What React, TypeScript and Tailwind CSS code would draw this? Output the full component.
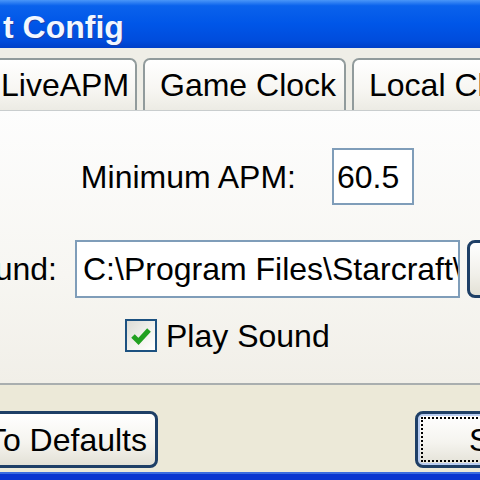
import React from "react";

const font = { fontFamily: '"Liberation Sans", Arial, sans-serif' };

function Tab({ label, className }: { label: string; className: string }) {
  return (
    <div
      className={`shrink-0 flex items-center pl-[15px] border-2 border-b-0 border-[#919B9C] rounded-t-[7px] bg-[linear-gradient(to_bottom,#FFFFFF,#F7F6F2_60%,#ECEBE4)] text-[32px] text-black whitespace-nowrap overflow-hidden ${className}`}
    >
      {label}
    </div>
  );
}

function XpButton({
  children,
  className,
  focused,
}: {
  children: React.ReactNode;
  className: string;
  focused?: boolean;
}) {
  return (
    <div
      className={`shrink-0 h-[57px] rounded-[8px] border-[3px] border-[#1E3F66] bg-[linear-gradient(to_bottom,#FFFFFF,#F5F4EF_55%,#E3E1D6)] p-[3px] ${focused ? "shadow-[inset_0_0_0_2px_#B9CDF2]" : ""} ${className}`}
    >
      <div
        className={`h-full flex items-center text-[32px] text-black whitespace-nowrap ${focused ? "border-2 border-dotted border-black" : ""}`}
      >
        {children}
      </div>
    </div>
  );
}

export default function App() {
  return (
    <div
      className="w-[480px] h-[480px] overflow-hidden flex flex-col bg-[#ECE9D8]"
      style={font}
    >
      {/* title bar */}
      <div className="h-[48px] shrink-0 flex items-center bg-[linear-gradient(to_bottom,#4A96F8,#0A62EC_12%,#0056E8_50%,#004CDC_85%,#0040C8)]">
        <span className="ml-[3px] pt-[5px] text-[32px] font-bold leading-none text-[#F2F7FF] whitespace-nowrap [text-shadow:1px_1px_0_#1A3FA8]">
          t Config
        </span>
      </div>

      {/* strip above tabs */}
      <div className="h-[10px] shrink-0 bg-[#EFEEE7]" />

      {/* tabs */}
      <div className="h-[52px] shrink-0 flex gap-[6px] bg-[#EFEEE7]">
        <Tab label="LiveAPM" className="ml-[-16px] w-[153px]" />
        <Tab label="Game Clock" className="w-[203px]" />
        <Tab label="Local Clock" className="w-[170px]" />
      </div>

      {/* tab page */}
      <div className="h-[275px] shrink-0 border-t border-[#C9CDCE] border-b-2 border-b-[#A9AEAF] bg-[linear-gradient(to_bottom,#FDFDFD,#F7F6F2_60%,#F1EFE8)] flex flex-col">
        <div className="mt-[37px] h-[57px] flex items-center">
          <div className="ml-[40px] w-[256px] shrink-0 text-right text-[32px] text-black whitespace-nowrap">
            Minimum APM:
          </div>
          <div className="ml-[36px] w-[82px] h-[57px] shrink-0 border-2 border-[#7F9DB9] bg-white flex items-center pl-[3px] text-[32px] text-black">
            60.5
          </div>
        </div>

        <div className="mt-[35px] h-[58px] flex items-center">
          <div className="ml-[-63px] w-[120px] shrink-0 text-right text-[32px] text-black whitespace-nowrap">
            Sound:
          </div>
          <div className="ml-[18px] w-[385px] h-[58px] shrink-0 border-2 border-[#7F9DB9] bg-white flex items-center pl-[6px] overflow-hidden whitespace-nowrap text-[32px] text-black">
            C:\Program Files\Starcraft\sound.wav
          </div>
          <div className="ml-[7px] w-[60px] h-[58px] shrink-0 rounded-[8px] border-[3px] border-[#1E3F66] bg-[linear-gradient(to_bottom,#FFFFFF,#F1F0EA_60%,#E3E1D6)]" />
        </div>

        <div className="mt-[21px] h-[33px] flex items-center ml-[125px]">
          <div className="w-[32px] h-[33px] shrink-0 border-2 border-[#1C5180] bg-[linear-gradient(135deg,#DCDCD6,#F4F4F0_60%,#FFFFFF)] flex items-center justify-center">
            <svg width="22" height="20" viewBox="0 0 22 20">
              <path
                d="M3 10 L8.5 15.5 L19 4"
                fill="none"
                stroke="#21A121"
                strokeWidth="5"
                strokeLinejoin="miter"
              />
            </svg>
          </div>
          <span className="ml-[9px] text-[32px] leading-none text-black whitespace-nowrap">
            Play Sound
          </span>
        </div>
      </div>

      {/* footer */}
      <div className="h-[87px] shrink-0 bg-[#ECE9D8] pt-[26px] flex justify-between">
        <XpButton className="ml-[-113px] w-[271px]">
          <span className="w-full text-right pr-[5px]">Reset To Defaults</span>
        </XpButton>
        <XpButton className="w-[160px] mr-[-95px]" focused>
          <span className="pl-[46px]">Save</span>
        </XpButton>
      </div>

      {/* bottom frame */}
      <div className="h-[8px] shrink-0 border-t-2 border-[#3A6CE0] bg-[#0A36D0]" />
    </div>
  );
}
